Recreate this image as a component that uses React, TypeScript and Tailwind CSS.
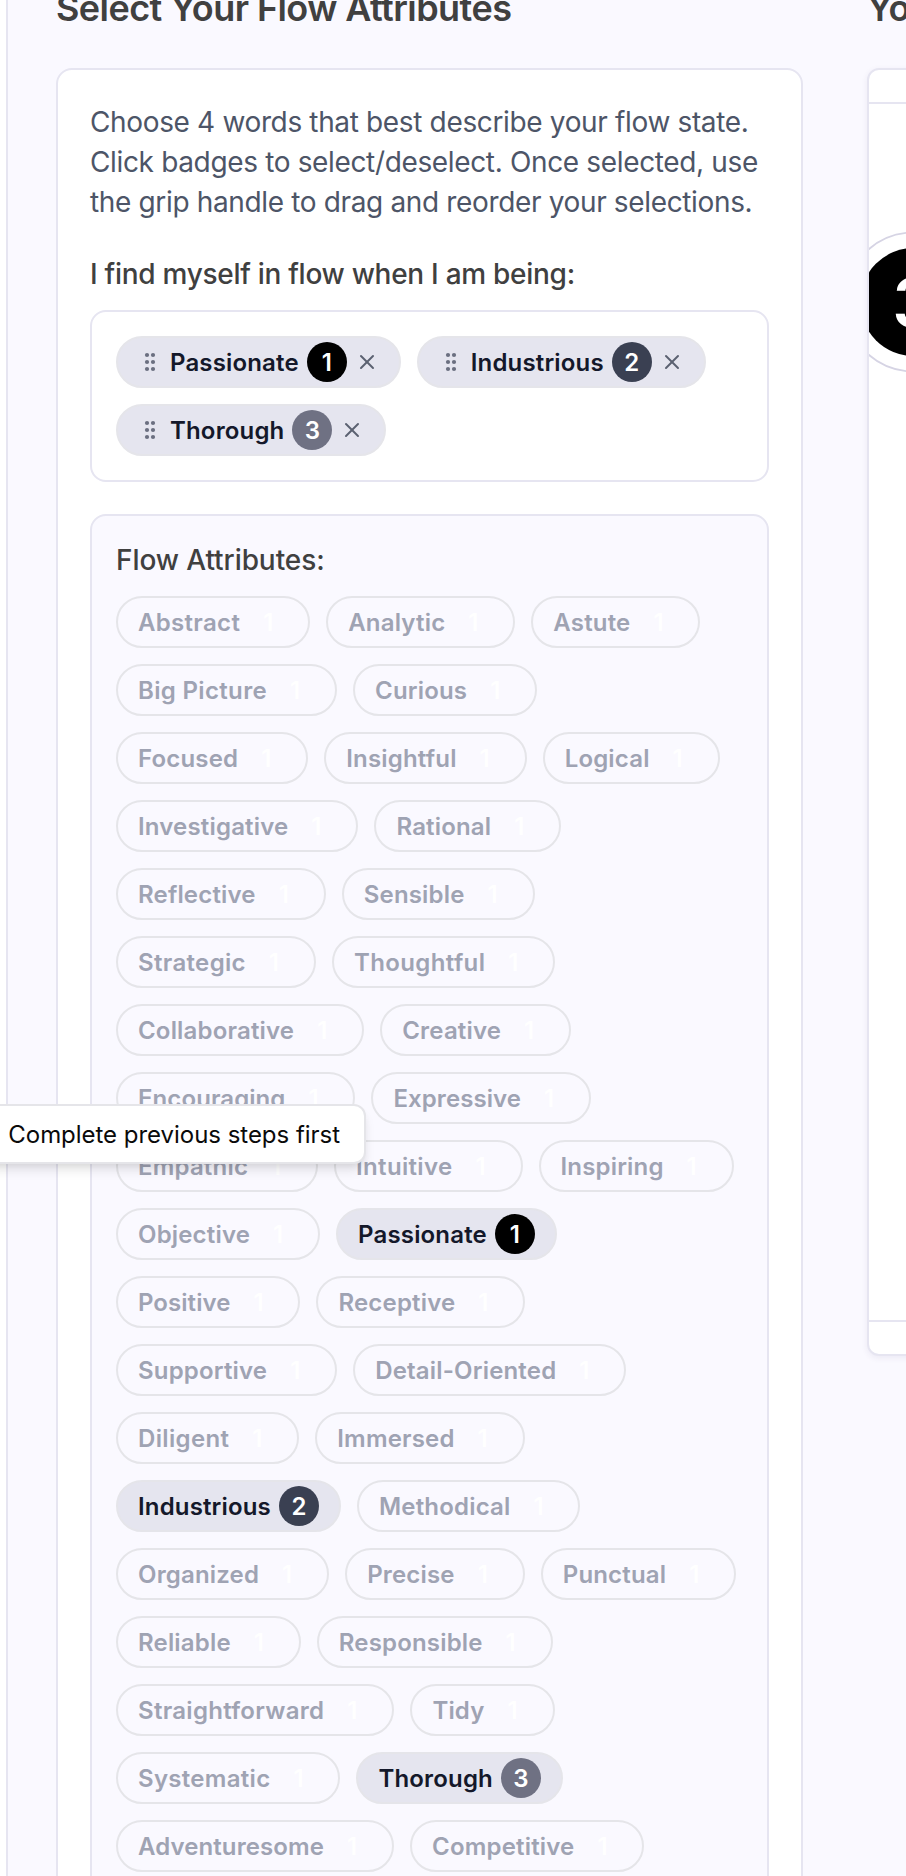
import { X } from "lucide-react";

type Pick = { name: string; rank: number };

const picks: Pick[] = [
  { name: "Passionate", rank: 1 },
  { name: "Industrious", rank: 2 },
  { name: "Thorough", rank: 3 },
];

const rows: string[][] = [
  ["Abstract", "Analytic", "Astute"],
  ["Big Picture", "Curious"],
  ["Focused", "Insightful", "Logical"],
  ["Investigative", "Rational"],
  ["Reflective", "Sensible"],
  ["Strategic", "Thoughtful"],
  ["Collaborative", "Creative"],
  ["Encouraging", "Expressive"],
  ["Empathic", "Intuitive", "Inspiring"],
  ["Objective", "Passionate"],
  ["Positive", "Receptive"],
  ["Supportive", "Detail-Oriented"],
  ["Diligent", "Immersed"],
  ["Industrious", "Methodical"],
  ["Organized", "Precise", "Punctual"],
  ["Reliable", "Responsible"],
  ["Straightforward", "Tidy"],
  ["Systematic", "Thorough"],
  ["Adventuresome", "Competitive"],
];

const rankColor: Record<number, string> = {
  1: "bg-black",
  2: "bg-[#3a4052]",
  3: "bg-[#6f7183]",
};

const tracking: Record<string, string> = {
  Abstract: "tracking-[0.32px]",
  "Big Picture": "tracking-[0.34px]",
  Strategic: "tracking-[0.34px]",
  Thoughtful: "tracking-[0.38px]",
  Encouraging: "tracking-[0.08px]",
  Expressive: "tracking-[0.08px]",
  Intuitive: "tracking-[0.34px]",
  Diligent: "tracking-[0.34px]",
  Straightforward: "tracking-[0.3px]",
  Systematic: "tracking-[0.3px]",
  Adventuresome: "tracking-[0.1px]",
  Positive: "tracking-[0.06px]",
};

function Rank({ rank }: { rank: number }) {
  return (
    <span className={`flex size-10 shrink-0 items-center justify-center rounded-full pt-0.5 text-white ${rankColor[rank]}`}>
      {rank}
    </span>
  );
}

function Grip() {
  return (
    <svg viewBox="0 0 24 24" className="size-6 shrink-0 fill-[#6b6f80]">
      {[5, 12, 19].map((y) => (
        <g key={y}>
          <circle cx="9" cy={y} r="2.1" />
          <circle cx="15" cy={y} r="2.1" />
        </g>
      ))}
    </svg>
  );
}

const pill =
  "flex h-[52px] shrink-0 items-center gap-2 whitespace-nowrap rounded-full border-2 px-5 text-[24px] leading-8 font-semibold";

function SelectedPill({ name, rank }: Pick) {
  return (
    <div className={`${pill} border-[#e5e5ea] bg-[#e5e5ef] text-[#14182a]`}>
      <Grip />
      <span className="pt-0.5 tracking-[0.16px]">{name}</span>
      <Rank rank={rank} />
      <X className="size-6 shrink-0 text-[#5b6171]" strokeWidth={2} />
    </div>
  );
}

function AttributePill({ name }: { name: string }) {
  const pick = picks.find((p) => p.name === name);
  if (pick) {
    return (
      <div className={`${pill} border-[#e5e5ea] bg-[#e5e5ef] text-[#14182a]`}>
        <span className="pt-0.5 tracking-[0.16px]">{name}</span>
        <Rank rank={pick.rank} />
      </div>
    );
  }
  return (
    <div className={`${pill} border-[#e5e5e9] text-[#9fa3b3]`}>
      <span className={`pt-0.5 ${tracking[name] ?? "tracking-[0.18px]"}`}>{name}</span>
      <span className="flex size-10 items-center justify-center pt-0.5 text-white">1</span>
    </div>
  );
}

export default function App() {
  return (
    <div className="relative flex h-[1876px] w-[906px] overflow-hidden bg-[#faf9ff] font-[Inter,sans-serif]">
      <div className="w-2 shrink-0 border-r-2 border-[#e6e5f1] bg-white" />
      <main className="ml-12 w-[747px] shrink-0">
        <h2 className="-mt-3 h-10 whitespace-nowrap text-[36px] leading-10 font-semibold tracking-[-0.56px] text-[#404040]">
          Select Your Flow Attributes
        </h2>
        <section className="mt-10 h-[1900px] rounded-2xl border-2 border-[#e6e5f1] bg-white p-8">
          <p className="whitespace-nowrap text-[28px] leading-10 tracking-[-0.35px] text-[#4d5567]">
            Choose 4 words that best describe your flow state.
            <br />
            Click badges to select/deselect. Once selected, use
            <br />
            the grip handle to drag and reorder your selections.
          </p>
          <h3 className="mt-8 text-[28px] leading-10 font-medium tracking-[-0.28px] text-[#404040]">
            I find myself in flow when I am being:
          </h3>
          <div className="mt-4 flex flex-wrap gap-4 rounded-2xl border-2 border-[#e6e5f1] p-6">
            {picks.map((p) => (
              <SelectedPill key={p.name} {...p} />
            ))}
          </div>
          <div className="mt-8 h-[1500px] rounded-2xl border-2 border-[#e6e5f1] bg-[#faf9ff] p-6">
            <h3 className="text-[28px] leading-10 font-medium tracking-[-0.08px] text-[#404040]">
              Flow Attributes:
            </h3>
            <div className="mt-4 flex flex-col gap-4">
              {rows.map((row) => (
                <div key={row[0]} className="flex gap-4">
                  {row.map((name) => (
                    <AttributePill key={name} name={name} />
                  ))}
                </div>
              ))}
            </div>
          </div>
        </section>
      </main>
      <aside className="ml-16 w-[700px] shrink-0">
        <h2 className="-mt-3 h-10 whitespace-nowrap text-[36px] leading-10 font-semibold tracking-[-0.54px] text-[#404040]">
          Your Flow
        </h2>
        <div className="mt-10 flex h-[1288px] flex-col overflow-hidden rounded-xl border-2 border-[#e6e5f1] bg-white shadow-[0_2px_6px_rgba(60,50,110,0.08)]">
          <div className="h-8 shrink-0" />
          <div className="flex-1 border-y-2 border-[#e6e5f1]">
            <svg viewBox="0 0 200 400" className="h-[400px] w-[200px]">
              <circle cx="45" cy="198" r="69.5" fill="white" stroke="#d6d4e4" strokeWidth="1.8" />
              <circle cx="45" cy="198" r="54" fill="black" />
              <text x="45" y="223" textAnchor="middle" fill="white" fontSize="68" fontWeight="600">
                3
              </text>
            </svg>
          </div>
          <div className="h-8 shrink-0" />
        </div>
      </aside>
      <div
        role="tooltip"
        className="absolute top-[1104px] right-[540px] rounded-xl border-2 border-[#e5e5e9] bg-white px-6 pt-[13px] pb-[11px] text-[24px] leading-8 tracking-[-0.03px] whitespace-nowrap text-[#0a0a0a] shadow-[0_8px_12px_-2px_rgba(0,0,0,0.1),0_4px_8px_-4px_rgba(0,0,0,0.1)]"
      >
        Complete previous steps first
      </div>
    </div>
  );
}
